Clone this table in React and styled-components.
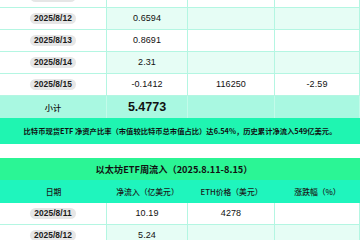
import React from "react";
import styled, { createGlobalStyle } from "styled-components";

const GlobalStyle = createGlobalStyle`
  html, body { margin: 0; padding: 0; background: #ffffff; }
  body {
    font-family: "Liberation Sans", "Noto Sans CJK SC", sans-serif;
    color: #111111;
    overflow: hidden;
  }
`;

const LINE = "#b4f6e2";
const COLS = "107px 81px 87px 85px";

const Page = styled.div`
  width: 360px;
  margin-top: -14px;
  display: flex;
  flex-direction: column;
`;

const Row = styled.div`
  display: grid;
  grid-template-columns: ${COLS};
  height: 22px;
  box-sizing: border-box;
  border-bottom: 1px solid ${LINE};
`;

const Cell = styled.div`
  display: flex;
  align-items: center;
  justify-content: center;
  border-right: 1px solid ${LINE};
  background: ${(p) => (p.$alt ? "#e6fdf5" : "#ffffff")};
  font-size: 9px;
  line-height: 1;
  letter-spacing: 0.1px;
`;

const DatePill = styled.span`
  display: inline-flex;
  align-items: center;
  height: 11px;
  padding: 0 4px;
  border-radius: 6px;
  background: #e6e6e6;
  font-size: 8.4px;
  font-weight: 700;
  color: #1a1a1a;
`;

const SubRow = styled.div`
  display: grid;
  grid-template-columns: ${COLS};
  height: 22px;
  background: #a9f8e1;
`;

const SubCell = styled.div`
  display: flex;
  align-items: center;
  justify-content: center;
  border-right: 1px solid #c3fbea;
  font-family: ${(p) => (p.$big ? `"Liberation Sans", sans-serif` : `"Noto Sans CJK SC", sans-serif`)};
  font-size: ${(p) => (p.$big ? "12.5px" : "8.2px")};
  font-weight: ${(p) => (p.$big ? 700 : 500)};
`;

const Note = styled.div`
  height: 26px;
  background: #1ff5b1;
  display: flex;
  align-items: center;
  justify-content: center;
  font-family: "Noto Sans CJK SC", sans-serif;
  font-size: 7.3px;
  font-weight: 700;
  white-space: nowrap;
`;

const Gap = styled.div`
  height: 14px;
  background: #ffffff;
`;

const Title = styled.div`
  height: 22px;
  background: #2bf595;
  display: flex;
  align-items: center;
  justify-content: center;
  padding-right: 12px;
  font-family: "Noto Sans CJK SC", sans-serif;
  font-size: 9.2px;
  font-weight: 700;
  white-space: nowrap;
`;

const HeadRow = styled.div`
  display: grid;
  grid-template-columns: ${COLS};
  height: 23px;
  background: #1ff5bd;
`;

const HeadCell = styled.div`
  display: flex;
  align-items: center;
  justify-content: center;
  font-family: "Noto Sans CJK SC", sans-serif;
  font-size: 7.8px;
  font-weight: 500;
  color: #1a1a1a;
  white-space: nowrap;
`;

const btcRows = [
  { d: "2025/8/11", v: "", p: "", c: "" },
  { d: "2025/8/12", v: "0.6594", p: "", c: "" },
  { d: "2025/8/13", v: "0.8691", p: "", c: "" },
  { d: "2025/8/14", v: "2.31", p: "", c: "" },
  { d: "2025/8/15", v: "-0.1412", p: "116250", c: "-2.59" },
];

const ethRows = [
  { d: "2025/8/11", v: "10.19", p: "4278", c: "" },
  { d: "2025/8/12", v: "5.24", p: "", c: "" },
];

function DataRow({ r, alt }) {
  return (
    <Row>
      <Cell>
        <DatePill>{r.d}</DatePill>
      </Cell>
      <Cell $alt={alt}>{r.v}</Cell>
      <Cell $alt={alt}>{r.p}</Cell>
      <Cell $alt={alt}>{r.c}</Cell>
    </Row>
  );
}

export default function App() {
  return (
    <>
      <GlobalStyle />
      <Page>
        {btcRows.map((r, i) => (
          <DataRow key={r.d} r={r} alt={i % 2 === 1} />
        ))}
        <SubRow>
          <SubCell>小计</SubCell>
          <SubCell $big>5.4773</SubCell>
          <SubCell />
          <SubCell />
        </SubRow>
        <Note>
          比特币现货ETF 净资产比率（市值较比特币总市值占比）达6.54%，历史累计净流入549亿美元。
        </Note>
        <Gap />
        <Title>以太坊ETF周流入（2025.8.11-8.15）</Title>
        <HeadRow>
          <HeadCell>日期</HeadCell>
          <HeadCell>净流入（亿美元）</HeadCell>
          <HeadCell>ETH价格（美元）</HeadCell>
          <HeadCell>涨跌幅（%）</HeadCell>
        </HeadRow>
        {ethRows.map((r, i) => (
          <DataRow key={r.d} r={r} alt={i % 2 === 1} />
        ))}
      </Page>
    </>
  );
}
